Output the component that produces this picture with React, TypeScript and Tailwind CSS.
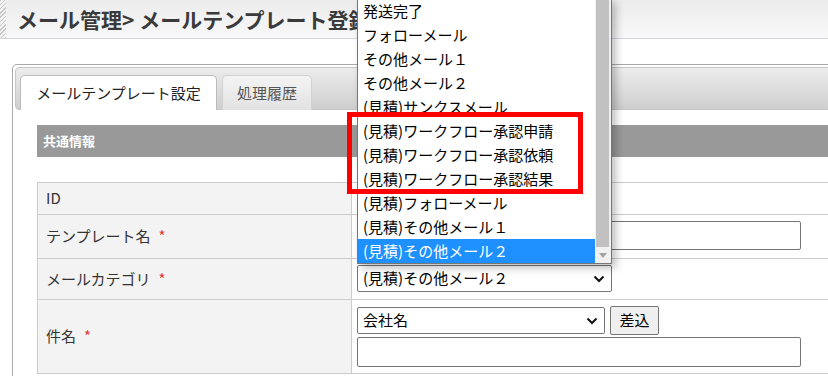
import React from "react";

const options = [
  "発送完了",
  "フォローメール",
  "その他メール１",
  "その他メール２",
  "(見積)サンクスメール",
  "(見積)ワークフロー承認申請",
  "(見積)ワークフロー承認依頼",
  "(見積)ワークフロー承認結果",
  "(見積)フォローメール",
  "(見積)その他メール１",
  "(見積)その他メール２",
];

const Chevron = () => (
  <svg width="12" height="8" viewBox="0 0 12 8" className="absolute right-[6px] top-1/2 -translate-y-1/2">
    <path d="M1.5 1.5 L6 6 L10.5 1.5" fill="none" stroke="#111" strokeWidth="2" />
  </svg>
);

const Required = () => <span className="ml-[8px] text-[#e53935]">*</span>;

const App = () => {
  return (
    <div className="relative w-[828px] h-[388px] overflow-hidden bg-white font-['Noto_Sans_CJK_JP','Noto_Sans',sans-serif] text-[#333]">
      {/* page title */}
      <header className="flex h-[39px] border-b border-[#d4d4dc] bg-gradient-to-b from-[#ececec] to-[#f8f8f8]">
        <div className="w-[6px] bg-[repeating-linear-gradient(135deg,#c8c8c8_0px,#c8c8c8_1px,#f2f2f2_1px,#f2f2f2_3px)]" />
        <h1 className="pl-[11px] text-[21px] font-bold leading-[38px] text-[#3a3a3a] whitespace-nowrap">
          メール管理&gt; メールテンプレート登録
        </h1>
      </header>

      {/* panel */}
      <div className="ml-[12px] mt-[25px] w-[900px] rounded-t-[5px] border border-b-0 border-[#aaa] p-[2px]">
        <div className="flex h-[43px] items-end gap-[5px] rounded-[4px] border border-[#c6c6c6] bg-gradient-to-b from-[#ececec] to-[#cfcfcf] pl-[4px]">
          <div className="-mb-px flex h-[35px] w-[197px] items-center justify-center rounded-t-[5px] border border-b-0 border-[#bbb] bg-white text-[15px] text-[#222]">
            メールテンプレート設定
          </div>
          <div className="-mb-px flex h-[35px] w-[90px] items-center justify-center rounded-t-[5px] border border-b-0 border-[#d2d2d2] bg-gradient-to-b from-[#f4f4f4] to-[#e2e2e2] text-[15px] text-[#555]">
            処理履歴
          </div>
        </div>

        <div className="pl-[22px] pt-[15px]">
          <div className="flex h-[32px] items-center bg-[#999] pl-[6px] text-[13px] font-bold text-white">
            共通情報
          </div>

          <div className="mt-[25px] border-t border-[#ccc] text-[15px]">
            <div className="flex h-[32px] border-b border-[#ccc]">
              <div className="flex w-[315px] items-center border-x border-[#ccc] bg-[#f2f3f2] pl-[8px]">ID</div>
              <div className="flex-1" />
            </div>
            <div className="flex h-[44px] border-b border-[#ccc]">
              <div className="flex w-[315px] items-center border-x border-[#ccc] bg-[#f2f3f2] pl-[8px]">
                テンプレート名<Required />
              </div>
              <div className="flex-1 pl-[5px] pt-[6px]">
                <input className="h-[29px] w-[444px] rounded-[2px] border border-[#767676] bg-white" />
              </div>
            </div>
            <div className="flex h-[41px] border-b border-[#ccc]">
              <div className="flex w-[315px] items-center border-x border-[#ccc] bg-[#f2f3f2] pl-[8px]">
                メールカテゴリ<Required />
              </div>
              <div className="flex-1 pl-[5px] pt-[6px]">
                <div className="relative flex h-[27px] w-[255px] items-center rounded-[2px] border border-[#767676] bg-white pl-[5px] text-[15px] text-black">
                  (見積)その他メール２
                  <Chevron />
                </div>
              </div>
            </div>
            <div className="flex h-[74px] border-b border-[#ccc]">
              <div className="flex w-[315px] items-center border-x border-[#ccc] bg-[#f2f3f2] pl-[8px]">
                件名<Required />
              </div>
              <div className="flex-1 pl-[5px] pt-[6px]">
                <div className="flex items-start gap-[5px]">
                  <div className="relative mt-px flex h-[27px] w-[248px] items-center rounded-[2px] border border-[#767676] bg-white pl-[5px] text-[15px] text-black">
                    会社名
                    <Chevron />
                  </div>
                  <button className="h-[29px] w-[49px] rounded-[2px] border border-[#767676] bg-[#efefef] text-[15px] text-black">
                    差込
                  </button>
                </div>
                <div className="mt-[2px] h-[30px] w-[444px] rounded-[2px] border border-[#767676] bg-white" />
              </div>
            </div>
          </div>
        </div>
      </div>

      {/* opened select list */}
      <div className="absolute left-[357px] top-[-2px] flex w-[255px] border border-[#767676] bg-white shadow-[4px_4px_8px_rgba(0,0,0,0.25)]">
        <ul className="flex-1 text-[15px] text-black">
          {options.map((opt, i) => (
            <li
              key={opt}
              className={
                i === options.length - 1
                  ? "flex h-[24px] items-center bg-[#1e90ff] pl-[5px] text-white"
                  : "flex h-[24px] items-center pl-[5px]"
              }
            >
              {opt}
            </li>
          ))}
        </ul>
        <div className="flex w-[16px] flex-col bg-[#f1f1f1]">
          <div className="ml-px mr-[2px] flex-1 bg-[#c1c1c1]" />
          <div className="flex h-[16px] items-center justify-center">
            <svg width="8" height="5" viewBox="0 0 8 5">
              <path d="M0 0 H8 L4 5 Z" fill="#a3a3a3" />
            </svg>
          </div>
        </div>
      </div>

      {/* highlight box */}
      <div className="absolute left-[347px] top-[112px] h-[82px] w-[236px] border-[5px] border-[#ff0000]" />
    </div>
  );
};

export default App;
